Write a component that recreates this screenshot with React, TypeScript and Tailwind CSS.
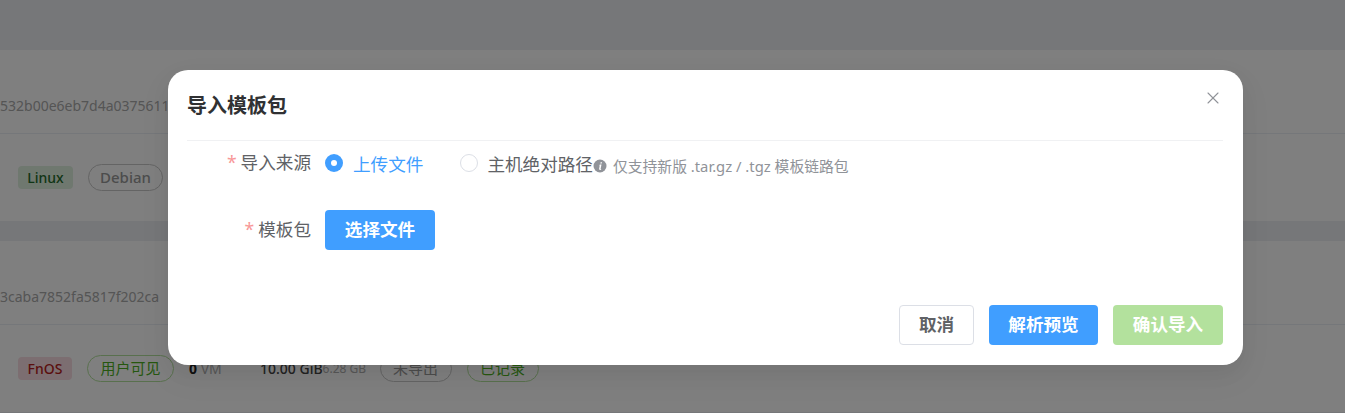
import { X } from "lucide-react";

const FONT = { fontFamily: '"Noto Sans", "Noto Sans CJK SC", sans-serif' };

function InfoDot() {
  return (
    <svg viewBox="0 0 14 14" className="mt-[6px] h-[14px] w-[14px] shrink-0">
      <circle cx="7" cy="7" r="6.5" fill="#909399" />
      <path d="M7.6 3.2h1.5l-.3 1.4H7.3zM7 5.6h1.5l-.9 4.4c0 .2.2.3.6.1l-.1.7c-.9.4-2.1.3-2-.7l.6-3.6-.6-.2z" fill="#fff" />
    </svg>
  );
}

function Pill({ children, className }: { children: React.ReactNode; className: string }) {
  return (
    <span className={`flex h-[27px] items-center justify-center rounded-full border text-[15px] ${className}`}>
      {children}
    </span>
  );
}

function FormRow({ label, children }: { label: string; children: React.ReactNode }) {
  return (
    <div className="flex h-10 items-center">
      <label className="mb-[2px] w-[138px] shrink-0 pr-[14px] text-right text-[17.6px] text-[#606266]">
        <span className="mr-[4px] text-[#f89898]">*</span>
        {label}
      </label>
      {children}
    </div>
  );
}

export default function App() {
  return (
    <div className="relative h-[413px] w-[1345px] overflow-hidden bg-[#eceef2]" style={FONT}>
      {/* 背景のリスト */}
      <div className="pt-[50px]">
        <div className="bg-white">
          <div className="flex h-[84px] items-center border-b border-[#ebeef5] pt-[28px] text-sm text-[#aaaaaa]">
            532b00e6eb7d4a0375611
          </div>
          <div className="flex h-[87px] items-center gap-[15px] pl-[18px]">
            <span className="flex h-[23px] w-[55px] items-center justify-center rounded bg-[#dff0df] text-sm font-medium text-[#1f6b2a]">
              Linux
            </span>
            <Pill className="w-[75px] border-[#c8c8c8] font-medium text-[#999999]">Debian</Pill>
          </div>
        </div>
        <div className="h-5" />
        <div className="bg-white">
          <div className="flex h-[84px] items-center border-b border-[#ebeef5] pt-[28px] text-sm text-[#aaaaaa]">
            3caba7852fa5817f202ca
          </div>
          <div className="flex h-[87px] items-center pl-[18px]">
            <span className="flex h-[23px] w-[54px] items-center justify-center rounded bg-[#f8dde2] text-sm font-medium text-[#b71c1c]">
              FnOS
            </span>
            <Pill className="ml-[15px] w-[87px] border-[#b3e19d] text-[#4caf1f]">用户可见</Pill>
            <span className="ml-[15px] w-[71px] text-sm text-[#b0b0b0]">
              <b className="text-sm text-[#222222]">0</b> VM
            </span>
            <span className="text-sm font-medium whitespace-nowrap text-[#444444]">10.00 GiB</span>
            <span className="w-[57px] text-xs whitespace-nowrap text-[#b0b0b0]">6.28 GB</span>
            <Pill className="w-[72px] border-[#c8c8c8] text-[#999999]">未导出</Pill>
            <Pill className="ml-[15px] w-[72px] border-[#b3e19d] text-[#4caf1f]">已记录</Pill>
          </div>
        </div>
      </div>

      <div className="absolute inset-0 bg-black/50">
        {/* ダイアログ */}
        <div className="relative mt-[70px] ml-[168px] flex h-[295px] w-[1075px] flex-col rounded-[20px] bg-white pr-5 pb-5 pl-[19px] shadow-[0_12px_32px_4px_rgba(0,0,0,0.04),0_8px_20px_rgba(0,0,0,0.05)]">
          <div className="flex h-[71px] shrink-0 items-center border-b border-[#f0f1f3] pt-[2px]">
            <h2 className="text-xl leading-none font-bold text-[#303133]">导入模板包</h2>
          </div>
          <button className="absolute top-[18px] right-[20px] text-[#909399]">
            <X size={20} strokeWidth={1.3} />
          </button>

          <div className="flex flex-col gap-[27px] pt-[2px]">
            <FormRow label="导入来源">
              <span className="flex h-[18px] w-[18px] items-center justify-center rounded-full bg-[#409eff]">
                <span className="h-[6px] w-[6px] rounded-full bg-white" />
              </span>
              <span className="mt-[3px] ml-[10px] text-[17.6px] text-[#409eff]">上传文件</span>
              <span className="ml-[37px] h-[18px] w-[18px] rounded-full border border-[#dcdfe6]" />
              <span className="mt-[3px] ml-[9px] text-[17.6px] text-[#606266]">主机绝对路径</span>
              <InfoDot />
              <span className="mt-[6px] ml-[6px] text-[14.8px] text-[#909399]">仅支持新版 .tar.gz / .tgz 模板链路包</span>
            </FormRow>
            <FormRow label="模板包">
              <button className="h-10 w-[110px] rounded bg-[#409eff] pb-[2px] text-[17.6px] font-bold text-white">选择文件</button>
            </FormRow>
          </div>

          <div className="mt-auto flex justify-end gap-[15px]">
            <button className="h-10 w-[75px] rounded border border-[#dcdfe6] bg-white pb-[2px] text-[17.6px] font-bold text-[#606266]">取消</button>
            <button className="h-10 w-[109px] rounded bg-[#409eff] pb-[2px] text-[17.6px] font-bold text-white">解析预览</button>
            <button className="h-10 w-[110px] rounded bg-[#b3e19d] pb-[2px] text-[17.6px] font-bold text-white">确认导入</button>
          </div>
        </div>
      </div>
    </div>
  );
}
